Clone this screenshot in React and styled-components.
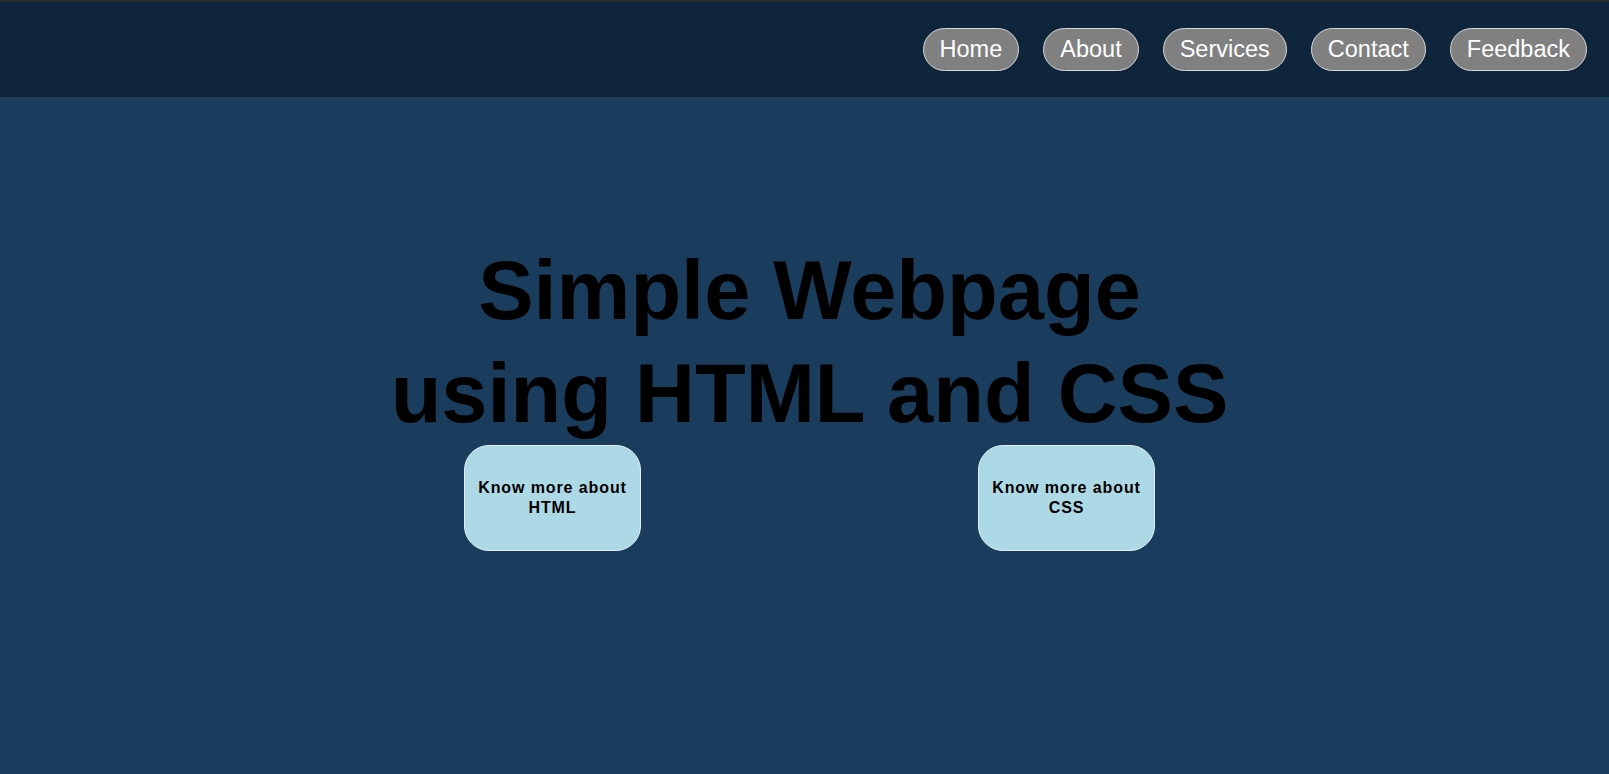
import React from 'react'
import styled, { createGlobalStyle } from 'styled-components'

const GlobalStyle = createGlobalStyle`
  html, body {
    margin: 0;
    padding: 0;
    background: #1a3d5e;
    font-family: "Liberation Sans", Arial, sans-serif;
  }
`;

const Page = styled.div`
  min-height: 774px;
  display: flex;
  flex-direction: column;
  background: #1a3d5e;
`;

const Nav = styled.nav`
  height: 95px;
  border-top: 2px solid #2b2b2b;
  background: #0f253b;
  display: flex;
  align-items: center;
  justify-content: flex-end;
  gap: 24px;
  padding-right: 22px;
`;

const NavLink = styled.a`
  display: block;
  padding: 7px 16px;
  line-height: 27px;
  font-size: 23.5px;
  color: #ffffff;
  background: #808080;
  border: 1px solid #d8d8d8;
  border-radius: 22px;
  text-decoration: none;
`;

const Main = styled.main`
  flex: 1;
  padding-top: 142px;
  padding-left: 10px;
  display: flex;
  flex-direction: column;
  align-items: center;
`;

const Title = styled.h1`
  margin: 0;
  font-size: 83px;
  line-height: 103px;
  font-weight: bold;
  color: #000;
  text-align: center;
`;

const Cards = styled.div`
  display: flex;
  justify-content: center;
  gap: 337px;
`;

const Card = styled.a`
  box-sizing: border-box;
  width: 177px;
  height: 106px;
  display: flex;
  align-items: center;
  justify-content: center;
  text-align: center;
  background: #add8e6;
  border: 1px solid #e4eef2;
  border-radius: 25px;
  color: #000;
  font-size: 16px;
  font-weight: bold;
  letter-spacing: 0.9px;
  line-height: 20px;
  text-decoration: none;
`;

const links = ['Home', 'About', 'Services', 'Contact', 'Feedback'];

export default function App() {
  return (
    <Page>
      <GlobalStyle />
      <Nav>
        {links.map(l => <NavLink key={l} href="#">{l}</NavLink>)}
      </Nav>
      <Main>
        <Title>Simple Webpage<br />using HTML and CSS</Title>
        <Cards>
          <Card href="#">Know more about<br />HTML</Card>
          <Card href="#">Know more about<br />CSS</Card>
        </Cards>
      </Main>
    </Page>
  )
}
